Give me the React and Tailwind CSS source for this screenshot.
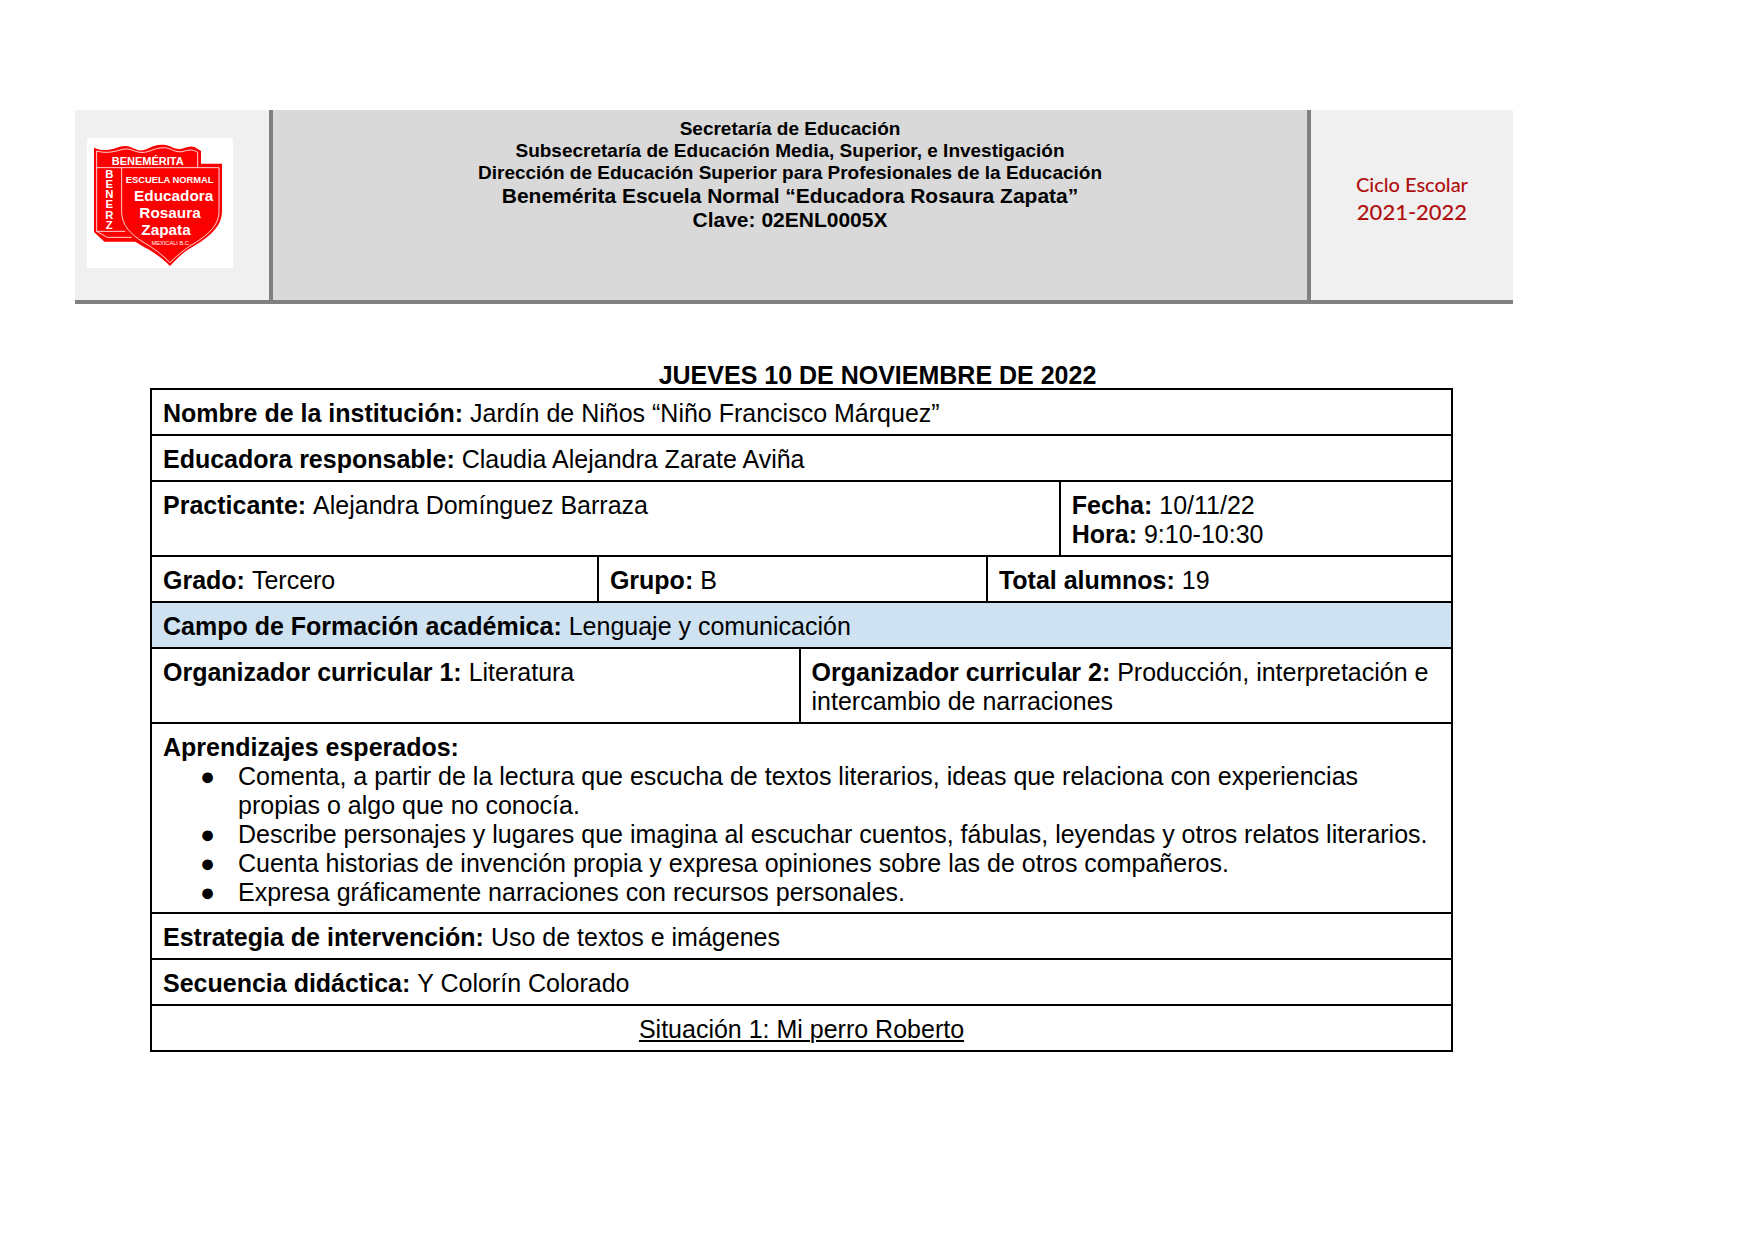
function SchoolCrest() {
  return (
    <svg
      viewBox="0 0 438 390"
      className="block w-[146px] h-[130px] bg-white"
      role="img"
      aria-label="Benemérita Escuela Normal Educadora Rosaura Zapata"
      fontFamily="'Liberation Sans', Arial, sans-serif"
      fontWeight="bold"
      fill="#ffffff"
    >
      <path
        d="M21 29 C40 38 58 38 80 32 C100 26 112 20 130 27 C146 34 160 42 178 34 C196 24 214 18 236 21 C254 24 262 36 284 32 C300 28 312 22 324 28 L342 39 L342 77 L405 77 L405 215 C405 245 396 262 372 287 C352 306 330 318 305 334 C285 346 268 364 249 384 C228 362 206 348 184 334 C170 326 156 318 144 311 L52 311 L21 282 Z"
        fill="#fb0000"
      />
      <g fill="none" stroke="#ffffff" strokeWidth="2.5">
        <path d="M29 39 C60 48 84 40 108 34 C134 28 142 46 172 43 C194 40 200 30 232 29 C252 30 262 44 286 41 C304 36 314 32 332 43 L332 88" />
        <path d="M29 39 L29 280 L61 298 L134 298" />
        <path d="M29 89 L396 89" />
        <path d="M29 280 L115 280" />
        <path d="M104 89 L104 226 C106 262 130 288 168 312 C200 330 226 350 249 374 C270 352 290 336 318 318 C362 292 396 262 396 220 L396 89" />
      </g>
      <text x="182" y="82" fontSize="33" textAnchor="middle">BENEMÉRITA</text>
      <g fontSize="34" textAnchor="middle">
        <text x="67" y="120">B</text>
        <text x="67" y="151">E</text>
        <text x="67" y="181">N</text>
        <text x="67" y="211">E</text>
        <text x="67" y="242">R</text>
        <text x="67" y="273">Z</text>
      </g>
      <text x="248" y="134" fontSize="28" textAnchor="middle">ESCUELA NORMAL</text>
      <text x="260" y="188" fontSize="46" textAnchor="middle">Educadora</text>
      <text x="249" y="239" fontSize="46" textAnchor="middle">Rosaura</text>
      <text x="237" y="291" fontSize="46" textAnchor="middle">Zapata</text>
      <text x="252" y="321" fontSize="17" fontWeight="normal" textAnchor="middle">MEXICALI B.C.</text>
    </svg>
  );
}

const outcomes = [
  "Comenta, a partir de la lectura que escucha de textos literarios, ideas que relaciona con experiencias propias o algo que no conocía.",
  "Describe personajes y lugares que imagina al escuchar cuentos, fábulas, leyendas y otros relatos literarios.",
  "Cuenta historias de invención propia y expresa opiniones sobre las de otros compañeros.",
  "Expresa gráficamente narraciones con recursos personales.",
];

function Cell({ label, children, span = 5, className = "pb-[6px]" }) {
  return (
    <td colSpan={span} className={`border-2 border-black px-[11px] pt-[9px] align-top ${className}`}>
      {label && <b>{label} </b>}
      {children}
    </td>
  );
}

export default function App() {
  return (
    <main className="min-h-screen bg-white pt-[110px] font-['Liberation_Sans',Arial,sans-serif] text-black">
      <header className="ml-[75px] mr-[242px] grid grid-cols-[198px_1fr_206px] border-b-4 border-[#808080] text-center">
        <div className="border-r-4 border-[#808080] bg-[#f0f0f0] pt-7 pl-3">
          <SchoolCrest />
        </div>
        <div className="bg-[#d9d9d9] pt-2 pb-[68px] text-[19px] leading-[22px] font-bold">
          <p>Secretaría de Educación</p>
          <p>Subsecretaría de Educación Media, Superior, e Investigación</p>
          <p>Dirección de Educación Superior para Profesionales de la Educación</p>
          <div className="text-[21px] leading-6">
            <p>Benemérita Escuela Normal “Educadora Rosaura Zapata”</p>
            <p>Clave: 02ENL0005X</p>
          </div>
        </div>
        <div className="border-l-4 border-[#808080] bg-[#f0f0f0] pt-[60px] font-[Lato,sans-serif] font-medium text-[#b10f0f]">
          <p className="text-[20px] leading-7">Ciclo Escolar</p>
          <p className="text-[22px] leading-7">2021-2022</p>
        </div>
      </header>

      <h1 className="mt-[58px] text-center text-[25px] leading-[26px] font-bold">JUEVES 10 DE NOVIEMBRE DE 2022</h1>

      <div className="ml-[150px] mr-[302px]">
        <table className="w-full table-fixed border-collapse text-[25px] leading-[29px]">
          <colgroup>
            <col className="w-[34.35%]" />
            <col className="w-[15.5%]" />
            <col className="w-[14.4%]" />
            <col className="w-[5.6%]" />
            <col className="w-[30.15%]" />
          </colgroup>
          <tbody>
            <tr>
              <Cell label="Nombre de la institución:">Jardín de Niños “Niño Francisco Márquez”</Cell>
            </tr>
            <tr>
              <Cell label="Educadora responsable:">Claudia Alejandra Zarate Aviña</Cell>
            </tr>
            <tr>
              <Cell label="Practicante:" span={4}>Alejandra Domínguez Barraza</Cell>
              <Cell label="Fecha:" span={1}>
                10/11/22
                <br />
                <b>Hora:</b> 9:10-10:30
              </Cell>
            </tr>
            <tr>
              <Cell label="Grado:" span={1}>Tercero</Cell>
              <Cell label="Grupo:" span={2}>B</Cell>
              <Cell label="Total alumnos:" span={2}>19</Cell>
            </tr>
            <tr>
              <Cell label="Campo de Formación académica:" className="bg-[#cfe2f1] pb-[6px]">Lenguaje y comunicación</Cell>
            </tr>
            <tr>
              <Cell label="Organizador curricular 1:" span={2}>Literatura</Cell>
              <Cell label="Organizador curricular 2:" span={3}>
                Producción, interpretación e intercambio de narraciones
              </Cell>
            </tr>
            <tr>
              <Cell label="Aprendizajes esperados:" className="pb-[5px]">
                <ul>
                  {outcomes.map((text) => (
                    <li key={text} className="flex pl-[37px]">
                      <span className="w-[38px] shrink-0" aria-hidden="true">●</span>
                      <span>{text}</span>
                    </li>
                  ))}
                </ul>
              </Cell>
            </tr>
            <tr>
              <Cell label="Estrategia de intervención:">Uso de textos e imágenes</Cell>
            </tr>
            <tr>
              <Cell label="Secuencia didáctica:">Y Colorín Colorado</Cell>
            </tr>
            <tr>
              <Cell className="pb-[6px] text-center">
                <span className="underline decoration-2 underline-offset-2">Situación 1: Mi perro Roberto</span>
              </Cell>
            </tr>
          </tbody>
        </table>
      </div>
    </main>
  );
}
